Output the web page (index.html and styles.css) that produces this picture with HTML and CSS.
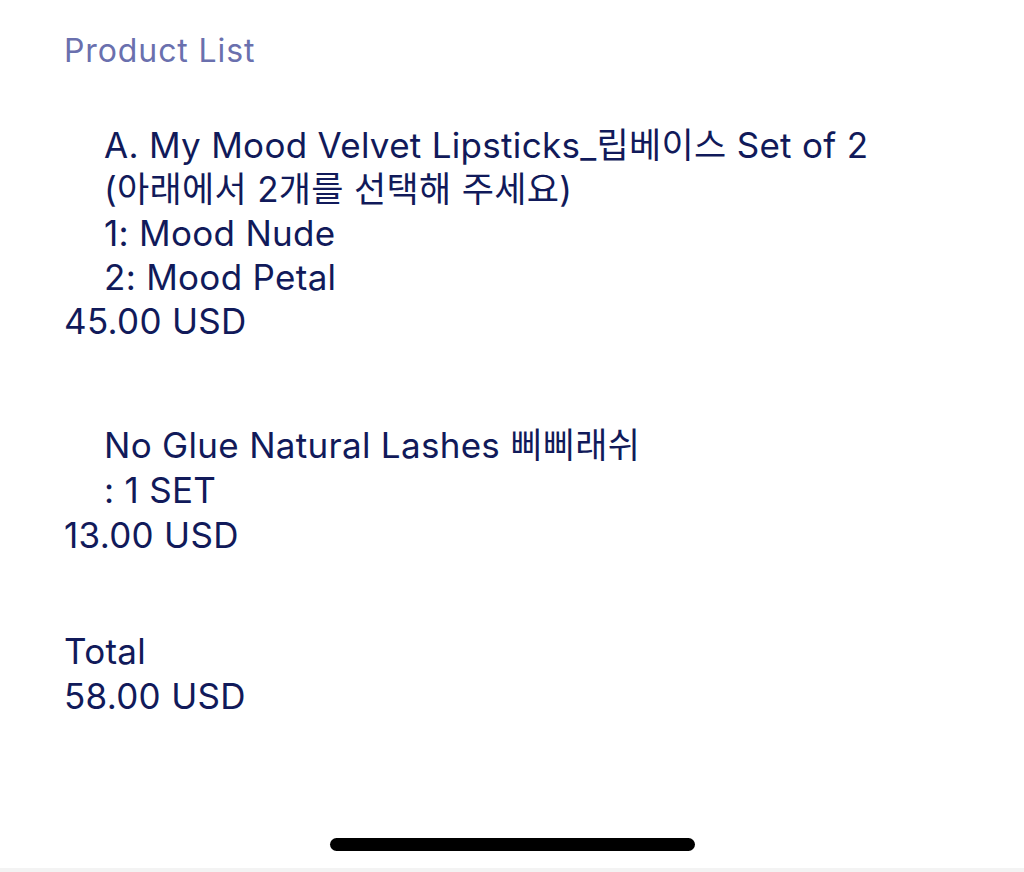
FILE: index.html
```html
<!DOCTYPE html>
<html lang="ko">
<head>
<meta charset="utf-8">
<link rel="stylesheet" href="styles.css">
</head>
<body>
<div class="screen">
  <h1 class="title">Product List</h1>
  <section class="item item-first">
    <div class="name">A. My Mood Velvet Lipsticks_립베이스 Set of 2</div>
    <div class="name">(아래에서 2개를 선택해 주세요)</div>
    <div class="name">1: Mood Nude</div>
    <div class="name">2: Mood Petal</div>
    <div class="price">45.00 USD</div>
  </section>
  <section class="item item-second">
    <div class="name">No Glue Natural Lashes 삐삐래쉬</div>
    <div class="name">: 1 SET</div>
    <div class="price">13.00 USD</div>
  </section>
  <section class="total">
    <div class="line">Total</div>
    <div class="line">58.00 USD</div>
  </section>
  <div class="home-area"><div class="home-indicator"></div></div>
</div>
</body>
</html>
```
FILE: styles.css
```css
html, body {
  margin: 0;
  padding: 0;
  background: #ffffff;
}
.screen {
  width: 1024px;
  height: 872px;
  position: relative;
  overflow: hidden;
  font-family: Inter, "Noto Sans CJK KR", sans-serif;
  color: #111a5a;
  background: #ffffff;
  border-bottom: 4px solid #f3f3f3;
  box-sizing: border-box;
}
.title {
  margin: 0;
  padding: 31px 0 0 64px;
  font-size: 32px;
  font-weight: 400;
  line-height: 40px;
  letter-spacing: 0.9px;
  color: #6a70ae;
}
.item, .total {
  padding-left: 64px;
  font-size: 35px;
  line-height: 44px;
  letter-spacing: 0.3px;
}
.item-first { margin-top: 52px; }
.item-second { margin-top: 80px; line-height: 45px; }
.total { margin-top: 71px; line-height: 45px; }
.name { padding-left: 40px; }
.home-area {
  position: absolute;
  left: 0;
  right: 0;
  bottom: 17px;
  display: flex;
  justify-content: center;
}
.home-indicator {
  width: 365px;
  height: 13px;
  border-radius: 7px;
  background: #000;
}
```
